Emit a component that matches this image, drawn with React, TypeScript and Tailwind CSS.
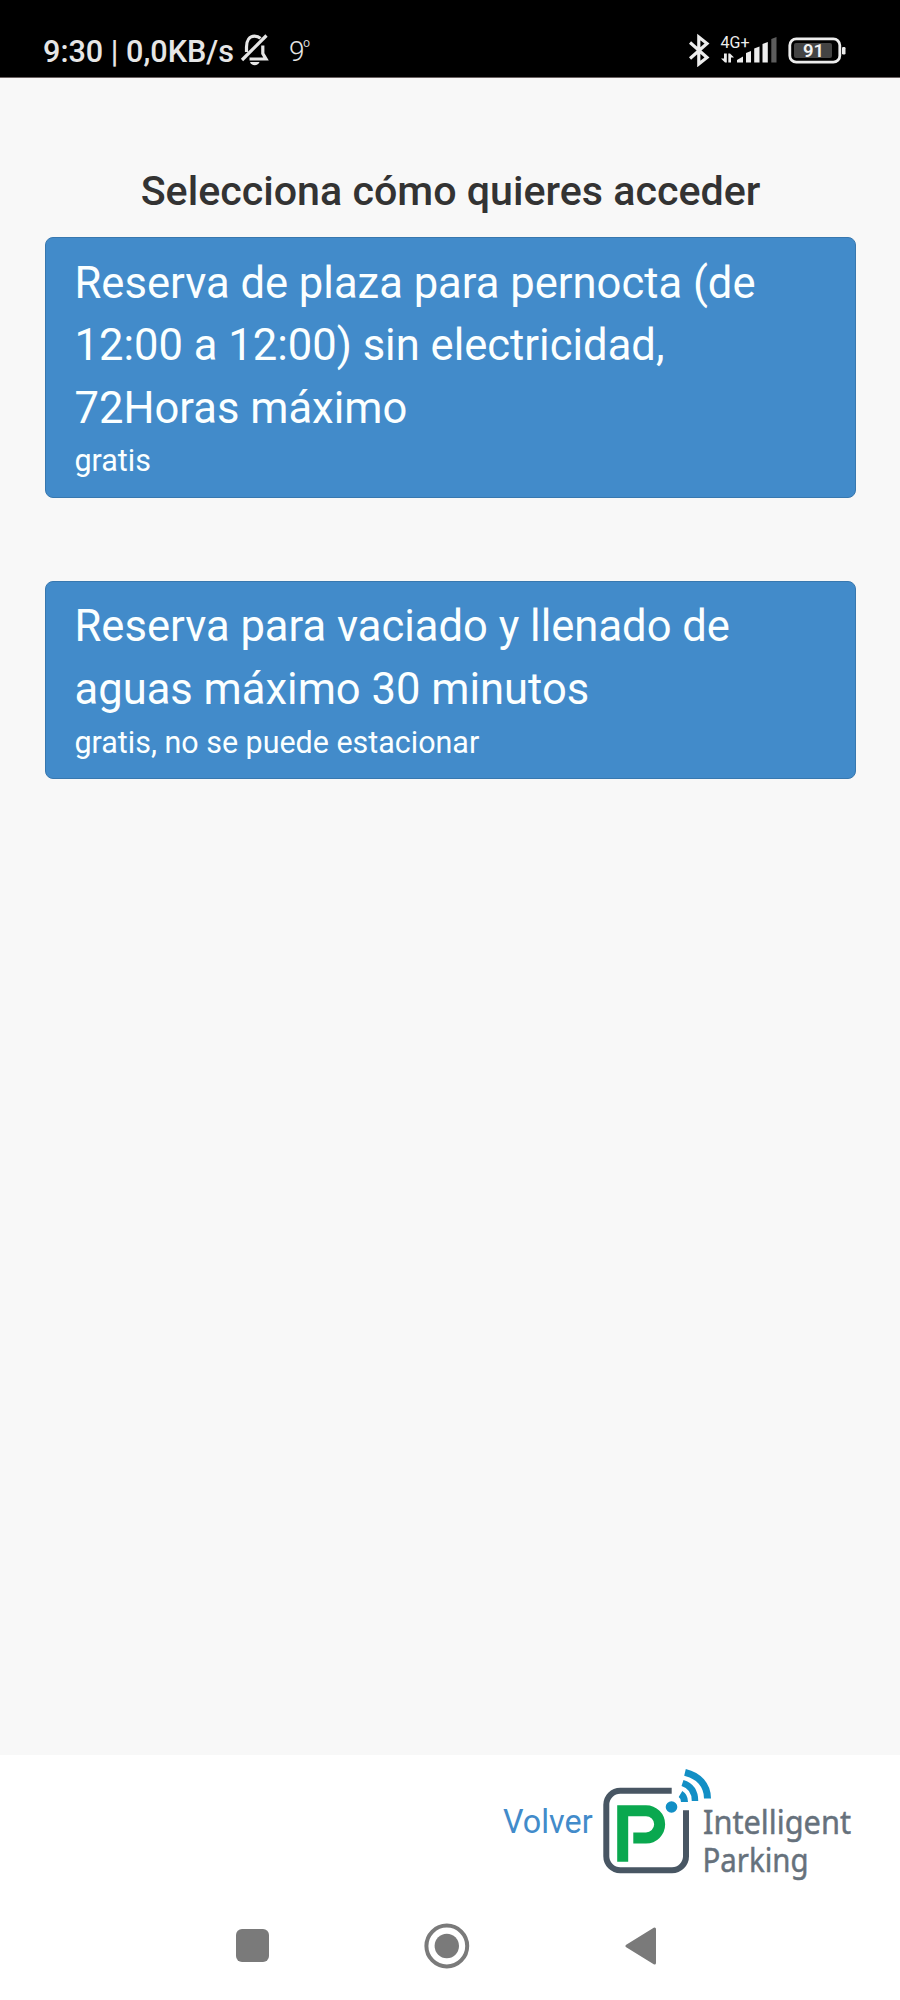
type AccessOption = {
  title: string[],
  detail: string,
}

const options: AccessOption[] = [
  {
    title: ["Reserva de plaza para pernocta (de", "12:00 a 12:00) sin electricidad,", "72Horas máximo"],
    detail: "gratis",
  },
  {
    title: ["Reserva para vaciado y llenado de", "aguas máximo 30 minutos"],
    detail: "gratis, no se puede estacionar",
  },
];

const BellOffIcon = () => (
  <svg className="ml-[7px] shrink-0" width="30" height="34" viewBox="0 0 30 34" fill="none" stroke="#e6e6e6" strokeWidth="3.2">
    <path d="M6.5 19V14C6.5 7.5 9.5 3.2 14.5 3.2C17 3.2 19 4 20.5 5.4" />
    <path d="M22.8 12.5V20.5L26 26H9.5" />
    <path d="M2 27L26.5 2.5" />
    <path d="M10 29H19.5C19 31 17 32.2 14.7 32.2S10.5 31 10 29Z" fill="#e6e6e6" stroke="none" />
  </svg>
)

const BluetoothIcon = () => (
  <svg className="shrink-0" width="21" height="34" viewBox="0 0 21 34" fill="none" stroke="#ededed" strokeWidth="3.2">
    <path d="M1 9.5L18 24.5L9.8 31V4L18 10.5L1 25.5" />
  </svg>
)

const SignalIcon = () => (
  <svg className="ml-[10px] shrink-0" width="58" height="30" viewBox="0 0 58 30" fill="#ededed">
    <text x="0.5" y="12.5" fontSize="16" textLength="29" lengthAdjust="spacingAndGlyphs" fontFamily="Roboto">4G+</text>
    <path d="M1 23.5H4V18.5H6.8V27.5H5Z" />
    <path d="M8.3 18.5H10L14 22.5H11V27.5H8.3Z" />
    <path d="M17 27.5V25L23 21.5V27.5Z" />
    <path d="M26 18L31 16V27.5H26Z" />
    <path d="M34.2 13.5L39.5 11.5V27.5H34.2Z" />
    <path d="M42.5 9L47.8 7V27.5H42.5Z" />
    <path d="M51.3 4L56.5 2V27.5H51.3Z" fill="#5c5c5c" />
  </svg>
)

const BatteryIcon = () => (
  <svg className="ml-[10px] shrink-0" width="58" height="27" viewBox="0 0 58 27">
    <rect x="1.8" y="1.8" width="50" height="23.4" rx="6.5" fill="none" stroke="#ededed" strokeWidth="2.8" />
    <rect x="6" y="6" width="38" height="15" rx="2" fill="#444" />
    <rect x="54" y="10" width="3.5" height="7.5" rx="1.2" fill="#ededed" />
    <text x="15" y="20.2" fontSize="18.5" fontWeight="600" textLength="21" fontFamily="Roboto" fill="#f2f2f2">91</text>
  </svg>
)

const StatusBar = () => {
  return (
    <div className="flex h-[78px] items-center border-b border-[#6b6262] bg-black pt-[23px] pl-[43px] pr-[54px] text-[#e6e6e6]">
      <div className="mt-[4px] w-[190px] text-[30.6px] leading-[38px] font-medium whitespace-nowrap">9:30 | 0,0KB/s</div>
      <BellOffIcon />
      <div className="mt-[3px] ml-[19px] flex items-start">
        <span className="text-[28px] leading-[36px] font-light tracking-[-2px]">9</span>
        <span className="text-[18px] leading-[26px] font-light">º</span>
      </div>
      <div className="ml-auto flex items-center">
        <BluetoothIcon />
        <SignalIcon />
        <BatteryIcon />
      </div>
    </div>
  )
}

const OptionButton = ({title, detail}: AccessOption) => {
  return (
    <button className="block w-full rounded-[8px] border border-[#3878af] bg-[#428bca] pt-[14.5px] pb-[14px] pl-[28.5px] text-left text-[#fbffff]">
      {title.map((line) => (
        <div key={line} className="text-[43.55px] leading-[62.6px] whitespace-nowrap">{line}</div>
      ))}
      <div className="text-[30.45px] leading-[42.6px]">{detail}</div>
    </button>
  )
}

const Logo = () => (
  <svg className="ml-[8px] shrink-0" width="256" height="124" viewBox="0 0 256 124" fill="none">
    <path d="M71.7 30.8H20.3A14 14 0 0 0 6.3 44.8V96.3A14 14 0 0 0 20.3 110.3H72A14 14 0 0 0 86 96.3V50.3" stroke="#485663" strokeWidth="6" />
    <path d="M22.7 101.7V50.7H46A13.65 13.65 0 0 1 46 78H33.3" stroke="#0aa84f" strokeWidth="11" />
    <circle cx="71.5" cy="47" r="5.8" fill="#128fc5" />
    <g stroke="#128fc5">
      <path d="M80.5 34C83 35.5 84.5 38 84.5 42" strokeWidth="7" />
      <path d="M82.5 23C90.5 25.5 95 32 95 41" strokeWidth="6.5" />
      <path d="M85 12.3C98.5 15.5 107.5 25 107.5 38.5" strokeWidth="7" />
    </g>
    <g fill="#66717c" stroke="#66717c" strokeWidth="0.5" fontFamily="Noto Sans" fontSize="33.5">
      <text x="103" y="74" textLength="148" lengthAdjust="spacingAndGlyphs">Intelligent</text>
      <text x="102.5" y="111.5" textLength="106" lengthAdjust="spacingAndGlyphs">Parking</text>
    </g>
  </svg>
)

const NavBar = () => (
  <div className="flex h-[110px] items-center gap-[173px] pt-[1px] pl-[236px]">
    <div className="h-[33px] w-[33px] rounded-[6px] bg-[#7a7a7a]"></div>
    <svg className="-ml-[18px] shrink-0" width="46" height="46" viewBox="0 0 46 46">
      <circle cx="22.8" cy="23" r="20.4" fill="none" stroke="#7a7a7a" strokeWidth="4" />
      <circle cx="22.8" cy="23" r="12.2" fill="#7a7a7a" />
    </svg>
    <svg className="-ml-[18px] shrink-0" width="32" height="38" viewBox="0 0 32 38">
      <path d="M2 19L29.5 2V36Z" fill="#7a7a7a" stroke="#7a7a7a" strokeWidth="3" strokeLinejoin="round" />
    </svg>
  </div>
)

const App = () => {
  return (
    <div className="flex h-[2000px] w-[900px] flex-col overflow-hidden bg-[#f8f8f8] font-['Roboto',sans-serif]">
      <StatusBar />
      <main className="grow pt-[83px] pr-[44px] pl-[45px]">
        <h1 className="text-center text-[41.2px] leading-[60px] font-medium whitespace-nowrap text-[#333]">Selecciona cómo quieres acceder</h1>
        <div className="mt-[16px] flex flex-col gap-[83px]">
          {options.map((option) => (
            <OptionButton key={option.detail} {...option} />
          ))}
        </div>
      </main>
      <footer className="h-[245px] bg-white">
        <div className="flex h-[135px] pt-[5px] pl-[503px]">
          <a className="mt-[39px] w-[89px] text-[32.3px] leading-[46px] whitespace-nowrap text-[#428bca]">Volver</a>
          <Logo />
        </div>
        <NavBar />
      </footer>
    </div>
  )
}

export default App;
